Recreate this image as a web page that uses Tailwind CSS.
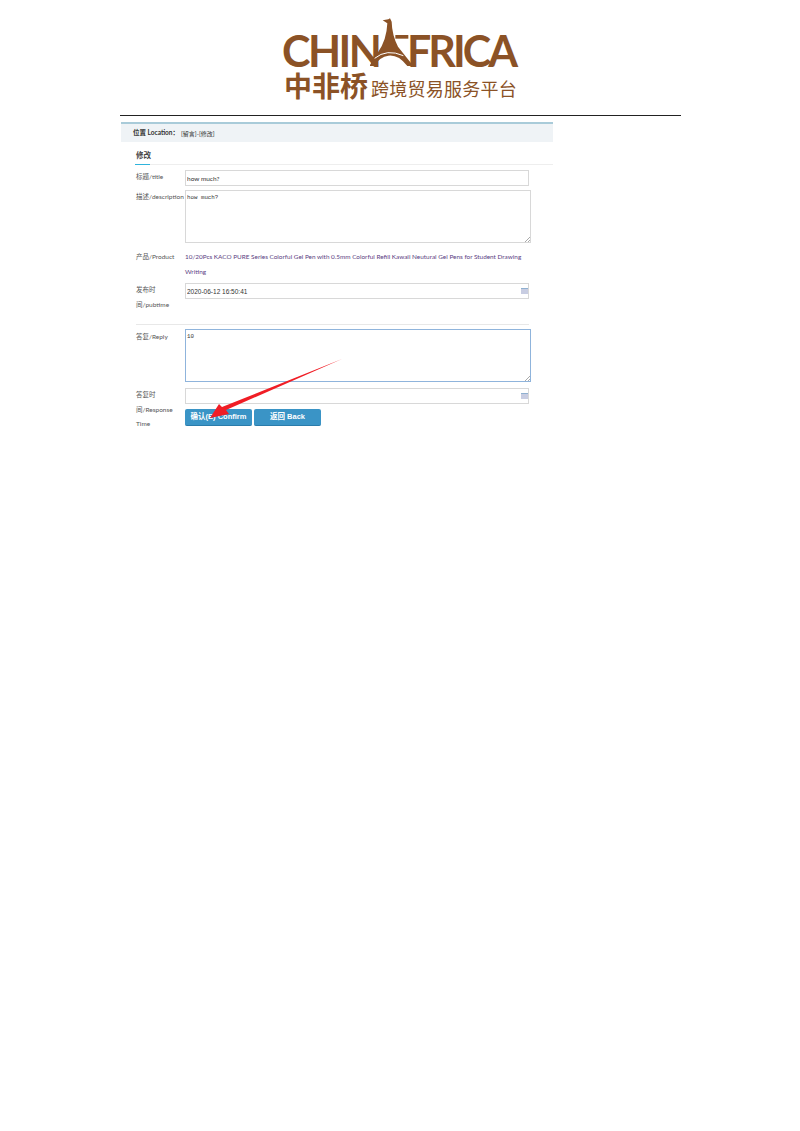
<!DOCTYPE html>
<html lang="en">

<head>
    <meta charset="UTF-8">
    <title>修改</title>
    <script src="https://cdn.jsdelivr.net/npm/@tailwindcss/browser@4"></script>
</head>

<body class="bg-white font-['Lato','Noto_Sans_CJK_SC',sans-serif] text-[6.5px] text-[#555] relative h-[1131px] overflow-hidden">

    <!--logo-->
    <div class="h-[115px] pt-[20px] pl-[282px]">
        <div class="flex items-end h-[46px] text-[#8b5226] font-['Lato',sans-serif] font-bold text-[43px] leading-[31px]">
            <span class="w-[88px] tracking-[-2.5px] whitespace-nowrap">CHIN</span>
            <svg class="w-[60px] h-[55px] -mr-[23px] -mt-[5px] shrink-0 self-start" viewBox="0 0 180 165">
                <path fill="#8b5226" d="M38 16L55 13 60 10 65 20 Q66 60 84 95L130 153H112Q85 118 55 122 30 125 12 153H0V150Q10 130 24 112 50 75 52 25Z" />
                <rect fill="#8b5226" x="76" y="60" width="39" height="11" />
                <path fill="none" stroke="#fff" stroke-width="3" d="M14 130Q50 100 100 122" />
            </svg>
            <span class="tracking-[-3px] whitespace-nowrap">FRICA</span>
        </div>
        <div class="flex items-end mt-[5px] text-[#8b5226] font-['Noto_Sans_CJK_SC',sans-serif] leading-none pl-[2px]">
            <span class="text-[28px] font-bold">中非桥</span>
            <span class="text-[18px] ml-[3px] mb-[2px] tracking-[0.25px]">跨境贸易服务平台</span>
        </div>
    </div>

    <div class="ml-[120px] w-[561px] border-t border-[#222] pt-[6px]">
        <div class="w-[432px] ml-[1px]">
            <!--location-->
            <div class="h-[20px] border-t-2 border-[#a9cbd9] bg-[#eff3f6] flex items-center pl-[12px] text-[#333] text-[6.5px] whitespace-nowrap">
                <span class="font-bold w-[48px]">位置 Location：</span>
                <span class="text-[6px]">[留言]-[修改]</span>
            </div>

            <!--heading-->
            <div class="ml-[14px] h-[23px] border-b border-[#eee] pt-[9px]">
                <span class="block h-[14px] w-[15px] pl-px border-b border-[#2fb4dc] text-[7.5px] leading-[10px] font-bold text-[#444] whitespace-nowrap">修改</span>
            </div>

            <!--form-->
            <div class="ml-[14px] w-[396px] pt-[5px]">
                <div class="flex h-[20px]">
                    <label class="w-[50px] pl-px pt-[2px]">标题/title</label>
                    <input class="w-[344px] h-[16px] border border-[#d8d8d8] px-[1px] text-[6.5px] text-[#333] font-['Lato',sans-serif]" value="how much?">
                </div>
                <div class="flex h-[60px]">
                    <label class="w-[50px] pl-px pt-[2px] whitespace-nowrap">描述/description</label>
                    <div class="relative h-[53px]">
                        <textarea class="block w-[346px] h-[53px] resize-none border border-[#d8d8d8] px-[1px] pt-[3px] text-[5.8px] leading-[8px] text-[#333] font-['Liberation_Mono',monospace]">how much?</textarea>
                        <svg class="absolute right-[1px] bottom-[1px] w-[5px] h-[5px]" viewBox="0 0 5 5"><path stroke="#aaa" fill="none" d="M0 5L5 0M3 5L5 3" /></svg>
                    </div>
                </div>
                <div class="flex h-[33px]">
                    <label class="w-[50px] pl-px leading-[14.5px]">产品/Product</label>
                    <a class="w-[339px] text-[6.4px] leading-[14.5px] text-[#5a3d82]" href="#">10/20Pcs KACO PURE Series Colorful Gel Pen with 0.5mm Colorful Refill Kawaii Neutural Gel Pens for Student Drawing Writing</a>
                </div>
                <div class="flex h-[41px]">
                    <label class="w-[50px] pl-px leading-[14.5px]">发布时<br>间/pubtime</label>
                    <div class="relative">
                        <input class="w-[344px] h-[16px] border border-[#d8d8d8] px-[1px] text-[6.5px] text-[#333] font-['Liberation_Sans',sans-serif]" value="2020-06-12 16:50:41">
                        <div class="absolute right-[1px] top-[5px] w-[7px] h-[6px] bg-[#c8cde2] border-t border-[#8fb0d0]"></div>
                    </div>
                </div>
                <div class="h-px bg-[#e8e8e8] ml-[1px] mr-[2px]"></div>
                <div class="flex h-[63px] pt-[4px]">
                    <label class="w-[50px] pl-px pt-[3px]">答复/Reply</label>
                    <div class="relative h-[53px]">
                        <textarea class="block w-[346px] h-[53px] resize-none border border-[#8fb4dc] px-[1px] pt-[3px] text-[5.8px] leading-[8px] text-[#333] font-['Liberation_Mono',monospace]">10</textarea>
                        <svg class="absolute right-[1px] bottom-[1px] w-[5px] h-[5px]" viewBox="0 0 5 5"><path stroke="#aaa" fill="none" d="M0 5L5 0M3 5L5 3" /></svg>
                    </div>
                </div>
                <div class="flex">
                    <label class="w-[50px] pl-px leading-[14.5px]">答复时<br>间/Response<br>Time</label>
                    <div>
                        <div class="relative">
                            <input class="w-[344px] h-[16px] border border-[#d8d8d8] block">
                            <div class="absolute right-[1px] top-[5px] w-[7px] h-[6px] bg-[#c8cde2] border-t border-[#8fb0d0]"></div>
                        </div>
                        <div class="flex gap-[2px] mt-[5px] font-['Liberation_Sans','Noto_Sans_CJK_SC',sans-serif]">
                            <button class="w-[67px] h-[17px] rounded-[2px] bg-[#3a94c6] border-b border-[#2a7cab] text-white font-bold text-[7.5px] whitespace-nowrap">确认(E) Confirm</button>
                            <button class="w-[67px] h-[17px] rounded-[2px] bg-[#3a94c6] border-b border-[#2a7cab] text-white font-bold text-[7.5px] whitespace-nowrap">返回 Back</button>
                        </div>
                    </div>
                </div>
            </div>
        </div>
    </div>

    <!--red arrow drawn over the screenshot-->
    <svg class="absolute left-0 top-0 w-[800px] h-[500px] pointer-events-none" viewBox="0 0 800 500">
        <polygon fill="#f01d25" points="342,359 226,410 229,414 210,418 219,404 222,407" />
    </svg>

</body>

</html>
